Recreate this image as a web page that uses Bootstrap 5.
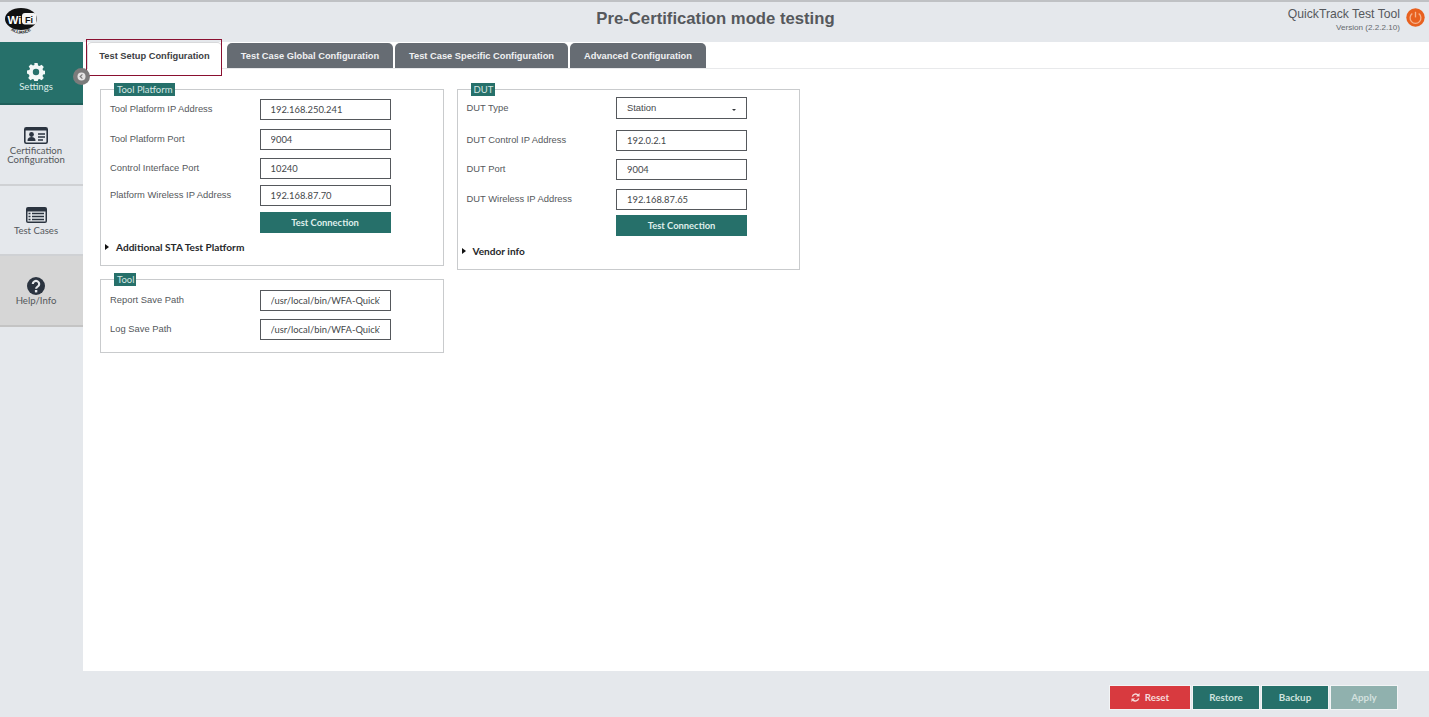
<!DOCTYPE html>
<html lang="en"><head><meta charset="utf-8"><title>QuickTrack Test Tool</title>
<link href="https://cdn.jsdelivr.net/npm/bootstrap@5.3.0/dist/css/bootstrap.min.css" rel="stylesheet">
<style>
html,body{height:717px;overflow:hidden}
body{font-family:"Liberation Sans",Arial,sans-serif;color:#4d4f52;background:#fff}
.shell{width:1429px;height:717px;display:flex;flex-direction:column;position:relative}
.topbar{height:42px;background:#e5e8ec;border-top:2px solid #bfc1c4;flex:none;display:flex;align-items:flex-start;position:relative}
.logo-box{width:83px;padding:5px 0 0 4px}
.apptitle{position:absolute;left:0;right:0;top:7px;text-align:center;font-size:16.7px;font-weight:700;color:#55585c;line-height:20px;padding-left:2px}
.brand{margin-left:auto;text-align:right;padding:5px 29px 0 0;position:relative}
.brand-name{font-size:12.2px;line-height:14px;color:#55585c}
.brand-ver{font-size:8.1px;line-height:11px;color:#666a6e;margin-top:1px}
.power{position:absolute;right:4px;top:6px}
.middle{flex:1;display:flex;min-height:0}
.sidenav{width:83px;background:#e5e8ec;flex:none;position:relative;font-family:Lato,sans-serif;font-size:9.6px;line-height:9px;text-align:center;color:#55585c}
.sideitem{display:flex;flex-direction:column;align-items:center;border-bottom:2px solid #cfd1d4;padding-right:11px}
.si-settings{height:63px;background:#26706a;color:#dfeeea;padding-top:21px;border-bottom-color:#1f5f5a}
.si-cert{height:81px;padding-top:22px}
.si-cases{height:70px;padding-top:21px}
.si-help{height:71px;padding-top:21px;background:#d6d6d6;border-bottom-color:#c4c4c4}
.sideitem svg{flex:none}
.si-settings svg{margin-bottom:1px}
.si-cert svg{margin-bottom:2px}
.si-cases svg{margin-bottom:3px}
.si-help svg{margin-bottom:1px}
.collapse-dot{position:absolute;left:73px;top:26px;width:17px;height:17px;border-radius:50%;background:#7b7b7b;display:flex;align-items:center;justify-content:center;z-index:3}
.content{flex:1;background:#fff;position:relative;min-width:0}
.tabrow{height:27px;border-bottom:1px solid #e8e9eb;padding:1px 0 0 4px;gap:2px;flex-wrap:nowrap}
.tabrow .nav-link{height:25px;border:0;border-radius:5px 5px 0 0;background:#666c73;color:#f0f1f2;font-size:9.3px;font-weight:700;line-height:26px;padding:0;text-align:center}
.tabrow .nav-link.active{background:#fff;color:#3d4043;border:1px solid #d8d9db;border-bottom:0;line-height:26px;margin-top:-1px;height:27px}
.tw1{width:135px;margin-right:3px}.tw2{width:166px}.tw3{width:173px}.tw4{width:136px}
.focusbox{position:absolute;left:3px;top:-3px;width:136px;height:37px;border:1px solid #8a1030;pointer-events:none}
.panes{display:flex;align-items:flex-start;gap:13px;padding:14px 0 0 17px}
.panecol{width:343.5px;display:flex;flex-direction:column;gap:7px}
.grp{border:1px solid #c9cbcd;margin:0;padding:0 0 0 9px;position:relative;min-width:0}
.grp legend{float:none;width:auto;margin:0 0 0 4px;padding:0 2px 0 3px;height:13px;background:#26706a;color:#d5e6e2;font-family:Lato,sans-serif;font-size:9.5px;line-height:13px;font-weight:400}
.frow{display:flex;align-items:center;height:20px;margin-bottom:9px}
.frow label{width:149.5px;flex:none;font-size:9.4px;color:#55585c;margin:0;line-height:1}
.fld{width:131px;height:21px;border:1px solid #55585c;border-radius:0;padding:0 10px;font-family:Lato,sans-serif;font-size:9.4px;color:#44474a;background:#fff;box-shadow:none;min-height:0}
.fld:focus{box-shadow:none;border-color:#55585c;color:#44474a}
.btn-pick{display:flex;align-items:center;justify-content:space-between;height:22px;padding:0 10px;font-family:"Liberation Sans",sans-serif;font-size:9.4px}
.btn-pick::after{margin:3px 0 0 0;border-top-width:.22em;border-right-width:.25em;border-left-width:.25em;color:#33363a}
.testbtn{width:131px;height:21px;background:#26706a;border:0;border-radius:0;color:#dfeeea;font-family:Lato,sans-serif;font-size:9.4px;font-weight:700;padding:0;line-height:21px}
.testbtn:hover{background:#26706a;color:#dfeeea}
.more{font-family:Lato,sans-serif;font-weight:700;font-size:10.1px;color:#26282b;display:flex;align-items:center;line-height:12px;margin-left:-5px}
.more i{display:block;width:0;height:0;border-left:4px solid #111;border-top:3px solid transparent;border-bottom:3px solid transparent;margin-right:7px}
.footbar{height:46px;flex:none;background:#e5e8ec;display:flex;justify-content:flex-end;align-items:flex-start;gap:1px;padding:14px 31px 0 0;position:relative}
.fbtn{height:25px;width:68px;border:1px solid #f2f4f5;border-radius:0;background:#26706a;color:#cfe3df;font-family:Lato,sans-serif;font-weight:700;font-size:9.8px;line-height:23px;padding:0;display:flex;align-items:center;justify-content:center;gap:5px}
.fbtn:hover{background:#26706a;color:#cfe3df}
.fbtn-red{width:82px;background:#d83a3f;color:#f6dcdc}
.fbtn-red:hover{background:#d83a3f;color:#f6dcdc}
.fbtn.disabled,.fbtn:disabled{background:#90b1ae;color:#d3e0de;opacity:1;border-color:#f2f4f5}
</style></head>
<body>
<div class="shell">
<header class="topbar">
  <div class="logo-box">
    <svg width="36" height="30" viewBox="0 0 36 30" aria-label="Wi-Fi Alliance">
      <ellipse cx="17" cy="12" rx="16" ry="11" fill="#111"/>
      <rect x="18" y="6" width="14.500" height="11.500" rx="3" fill="#f4f4f4"/>
      <text x="3.500" y="16.500" font-family="Liberation Sans" font-weight="700" font-size="11.500" fill="#fff">Wi</text>
      <text x="21" y="15.500" font-family="Liberation Sans" font-weight="700" font-size="9" fill="#111">Fi</text>
      <path id="arc" d="M6 22.500 Q17 31 29 22.500" fill="none"/>
      <text font-family="Liberation Sans" font-weight="700" font-size="4.300" fill="#111"><textPath href="#arc" startOffset="1">ALLIANCE</textPath></text>
    </svg>
  </div>
  <div class="apptitle">Pre-Certification mode testing</div>
  <div class="brand">
    <div class="brand-name">QuickTrack Test Tool</div>
    <div class="brand-ver">Version (2.2.2.10)</div>
    <svg class="power" width="19" height="19" viewBox="0 0 19 19"><circle cx="9.500" cy="9.500" r="9.200" fill="#e8611f"/><path d="M6.300 5.600a5.400 5.400 0 1 0 6.400 0" fill="none" stroke="#f6b48f" stroke-width="1.300"/><path d="M9.500 3.800v5.600" stroke="#f6b48f" stroke-width="1.300"/></svg>
  </div>
</header>
<div class="middle">
  <nav class="sidenav">
    <div class="sideitem si-settings">
      <svg width="18" height="18" viewBox="0 0 18 18"><path fill="#f3f8f7" fill-rule="evenodd" d="M7.400 0h3.200l.5 2.400 1.400.6 2.100-1.300 2.200 2.200-1.300 2.100.6 1.400 2.400.5v3.200l-2.400.5-.6 1.400 1.300 2.100-2.200 2.200-2.100-1.300-1.400.6-.5 2.400H7.400l-.5-2.400-1.400-.6-2.100 1.300-2.200-2.200 1.300-2.100-.6-1.400L0 10.600V7.400l2.400-.5.6-1.400-1.300-2.100 2.200-2.200 2.100 1.300 1.400-.6zM9 5.800a3.200 3.200 0 1 0 0 6.400 3.200 3.200 0 0 0 0-6.400z"/></svg>
      Settings
    </div>
    <div class="sideitem si-cert">
      <svg width="24" height="17" viewBox="0 0 24 17"><rect x=".8" y=".8" width="22.400" height="15.400" rx="1.500" fill="#e5e8ec" stroke="#2b3440" stroke-width="1.600"/><rect x="1" y="1" width="22" height="2.500" fill="#2b3440"/><circle cx="7.500" cy="7.500" r="2.400" fill="#2b3440"/><path d="M3.500 14c0-3 1.500-4 4-4s4 1 4 4z" fill="#2b3440"/><path d="M14 7h7M14 10h7M14 13h5" stroke="#2b3440" stroke-width="1.300"/></svg>
      <span>Certification<br>Configuration</span>
    </div>
    <div class="sideitem si-cases">
      <svg width="21" height="16" viewBox="0 0 21 16"><rect width="21" height="16" rx="2" fill="#2b3440"/><rect x="1.500" y="4.500" width="18" height="10" fill="#e5e8ec"/><path d="M6 6.500h12M6 9.500h12M6 12.500h12" stroke="#2b3440" stroke-width="1.500"/><path d="M2.500 6.500h2M2.500 9.500h2M2.500 12.500h2" stroke="#2b3440" stroke-width="1.500"/></svg>
      Test Cases
    </div>
    <div class="sideitem si-help">
      <svg width="18" height="18" viewBox="0 0 18 18"><circle cx="9" cy="9" r="9" fill="#2b3440"/><path d="M5.800 7a3.200 3 0 1 1 4.800 2.600c-1 .6-1.500 1-1.500 2.200" fill="none" stroke="#e5e8ec" stroke-width="2.200"/><rect x="7.900" y="13" width="2.400" height="2.400" fill="#e5e8ec"/></svg>
      Help/Info
    </div>
    <div class="collapse-dot"><svg width="9" height="9" viewBox="0 0 9 9"><circle cx="4.500" cy="4.500" r="4" fill="#e4e4e4"/><path d="M5.400 2.400 3.200 4.500l2.200 2.100" fill="none" stroke="#7b7b7b" stroke-width="1.200"/></svg></div>
  </nav>
  <main class="content">
    <ul class="nav nav-tabs tabrow">
      <li class="nav-item tw1"><a class="nav-link active" href="#">Test Setup Configuration</a></li>
      <li class="nav-item tw2"><a class="nav-link" href="#">Test Case Global Configuration</a></li>
      <li class="nav-item tw3"><a class="nav-link" href="#">Test Case Specific Configuration</a></li>
      <li class="nav-item tw4"><a class="nav-link" href="#">Advanced Configuration</a></li>
    </ul>
    <div class="focusbox"></div>
    <div class="panes">
      <div class="panecol">
        <fieldset class="grp" style="height:183px">
          <legend>Tool Platform</legend>
          <div class="frow" style="margin-top:3px;margin-bottom:10px"><label>Tool Platform IP Address</label><input class="form-control fld" value="192.168.250.241"></div>
          <div class="frow"><label>Tool Platform Port</label><input class="form-control fld" value="9004"></div>
          <div class="frow" style="margin-bottom:7px"><label>Control Interface Port</label><input class="form-control fld" value="10240"></div>
          <div class="frow" style="margin-bottom:7px"><label>Platform Wireless IP Address</label><input class="form-control fld" value="192.168.87.70"></div>
          <div class="frow" style="margin-bottom:9px"><label></label><button class="btn testbtn" type="button">Test Connection</button></div>
          <div class="more"><i></i>Additional STA Test Platform</div>
        </fieldset>
        <fieldset class="grp" style="height:80px">
          <legend>Tool</legend>
          <div class="frow" style="margin-top:4px"><label>Report Save Path</label><input class="form-control fld" value="/usr/local/bin/WFA-QuickTrack-Tool/"></div>
          <div class="frow"><label>Log Save Path</label><input class="form-control fld" value="/usr/local/bin/WFA-QuickTrack-Tool/"></div>
        </fieldset>
      </div>
      <div class="panecol">
        <fieldset class="grp" style="height:187px">
          <legend>DUT</legend>
          <div class="frow" style="margin-top:1px;margin-bottom:11px;height:22px"><label>DUT Type</label><button class="btn fld btn-pick dropdown-toggle" type="button" data-bs-toggle="dropdown">Station</button></div>
          <div class="frow"><label>DUT Control IP Address</label><input class="form-control fld" value="192.0.2.1"></div>
          <div class="frow" style="margin-bottom:10px"><label>DUT Port</label><input class="form-control fld" value="9004"></div>
          <div class="frow" style="margin-bottom:6px"><label>DUT Wireless IP Address</label><input class="form-control fld" value="192.168.87.65"></div>
          <div class="frow" style="margin-bottom:10px"><label></label><button class="btn testbtn" type="button">Test Connection</button></div>
          <div class="more"><i></i>Vendor info</div>
        </fieldset>
      </div>
    </div>
  </main>
</div>
<footer class="footbar">
  <button class="btn fbtn fbtn-red" type="button"><svg width="9" height="9" viewBox="0 0 10 10"><path d="M1.500 4A3.700 3.700 0 0 1 8 2.500M8.500 6A3.700 3.700 0 0 1 2 7.500" fill="none" stroke="#f6dcdc" stroke-width="1.500"/><path d="M9.500 0v4h-4zM.5 10V6h4z" fill="#f6dcdc"/></svg>Reset</button>
  <button class="btn fbtn" type="button">Restore</button>
  <button class="btn fbtn" type="button">Backup</button>
  <button class="btn fbtn" type="button" disabled>Apply</button>
</footer>
</div>
<script src="https://cdn.jsdelivr.net/npm/bootstrap@5.3.0/dist/js/bootstrap.bundle.min.js"></script>
</body></html>
